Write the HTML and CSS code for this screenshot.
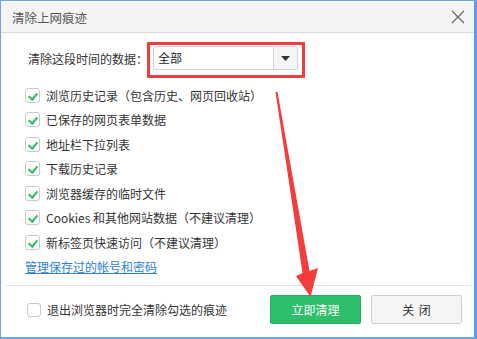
FILE: index.html
```html
<!DOCTYPE html>
<html lang="zh-CN">
<head>
  <meta charset="UTF-8">
  <title>清除上网痕迹</title>
  <link rel="stylesheet" href="styles.css">
</head>
<body>

<div class="window">
  <div class="titlebar">
    <span class="title">清除上网痕迹</span>
    <svg class="close" width="14" height="14" viewBox="0 0 14 14">
      <path d="M1 1 L13 13 M13 1 L1 13" stroke="#666" stroke-width="1.2" fill="none"/>
    </svg>
  </div>

  <div class="content">
    <div class="range-row">
      <span class="range-label">清除这段时间的数据：</span>
      <div class="select">
        <span class="select-value">全部</span>
        <span class="select-btn">
          <svg width="9" height="5" viewBox="0 0 9 5"><path d="M0 0 H9 L4.5 5 Z" fill="#333"/></svg>
        </span>
      </div>
      <div class="mark-box"></div>
    </div>

    <ul class="options">
      <li><span class="check on"></span>浏览历史记录（包含历史、网页回收站）</li>
      <li><span class="check on"></span>已保存的网页表单数据</li>
      <li><span class="check on"></span>地址栏下拉列表</li>
      <li><span class="check on"></span>下载历史记录</li>
      <li><span class="check on"></span>浏览器缓存的临时文件</li>
      <li><span class="check on"></span>Cookies 和其他网站数据（不建议清理）</li>
      <li><span class="check on"></span>新标签页快速访问（不建议清理）</li>
      <li class="link-row"><a href="#">管理保存过的帐号和密码</a></li>
    </ul>
  </div>

  <div class="footer">
    <label class="exit-opt"><span class="check"></span>退出浏览器时完全清除勾选的痕迹</label>
    <div class="buttons">
      <button class="btn btn-primary">立即清理</button>
      <button class="btn btn-close">关 闭</button>
    </div>
  </div>

  <svg class="arrow" width="477" height="339" viewBox="0 0 477 339">
    <polygon points="275.5,92 277.5,92 309.5,271 318,268 310.5,297 296,276 302.5,273" fill="#f33c3c"/>
  </svg>
</div>

</body>
</html>
```

FILE: styles.css
```css
* {
  box-sizing: border-box;
}
body {
  margin: 0;
  background: #fff;
  font-family: "Noto Sans CJK SC", "Microsoft YaHei", sans-serif;
  font-size: 12px;
  color: #333;
}
.window {
  position: relative;
  width: 477px;
  height: 339px;
  border: 1px solid #6aa6ee;
  border-right: 3px solid #5c9cea;
  border-bottom: 2px solid #6aa6ee;
  background: #fff;
  display: flex;
  flex-direction: column;
}
.titlebar {
  height: 32px;
  background: #f4f4f4;
  border-top: 1px solid #fff;
  border-bottom: 1px solid #d9d9d9;
  display: flex;
  align-items: center;
  justify-content: space-between;
  padding: 0 9px 0 11px;
}
.title {
  color: #555;
  font-size: 12.5px;
}
.close {
  display: block;
}
.content {
  padding: 0 0 0 24px;
  flex: 1;
}
.range-row {
  position: relative;
  display: flex;
  align-items: center;
  margin-top: 13px;
  padding-left: 3px;
}
.range-label {
  width: 125px;
}
.select {
  width: 145px;
  height: 24px;
  border: 1px solid #c9d4df;
  border-radius: 2px;
  display: flex;
  align-items: stretch;
  background: #fff;
}
.select-value {
  flex: 1;
  padding-left: 4px;
  line-height: 22px;
  color: #222;
}
.select-btn {
  width: 24px;
  border-left: 1px solid #c9d4df;
  background: #f5f5f5;
  display: flex;
  align-items: center;
  justify-content: center;
}
.mark-box {
  position: absolute;
  left: 122px;
  top: -4px;
  width: 158px;
  height: 36px;
  border: 3px solid #f33c3c;
}
.options {
  list-style: none;
  margin: 13px 0 0;
  padding: 0;
}
.options li {
  height: 24.5px;
  display: flex;
  align-items: center;
}
.check {
  width: 15px;
  height: 15px;
  border: 1px solid #c8c8c8;
  border-radius: 3px;
  background: #fff;
  margin-right: 6px;
  position: relative;
  flex: none;
}
.check.on::after {
  content: "";
  position: absolute;
  left: 4px;
  top: 2px;
  width: 4px;
  height: 7px;
  border-right: 2px solid #2dbb66;
  border-bottom: 2px solid #2dbb66;
  transform: rotate(40deg);
}
.link-row a {
  color: #2d7fd6;
  text-decoration: underline;
}
.footer {
  margin: 0 3px 13px 5px;
  border-top: 1px solid #dfe5ec;
  padding-top: 9px;
  display: flex;
  align-items: center;
  justify-content: space-between;
}
.exit-opt {
  display: flex;
  align-items: center;
  padding-left: 21px;
}
.exit-opt .check {
  width: 14px;
  height: 14px;
}
.buttons {
  display: flex;
  gap: 10px;
  padding-right: 9px;
}
.btn {
  width: 91px;
  height: 29px;
  border: 1px solid #cfcfcf;
  border-radius: 2px;
  background: #f5f5f5;
  font-family: inherit;
  font-size: 12px;
  color: #333;
}
.btn-close {
  word-spacing: 2px;
}
.btn-primary {
  background: #2dbf6a;
  border-color: #27ad5e;
  color: #fff;
}
.arrow {
  position: absolute;
  left: -1px;
  top: -1px;
  pointer-events: none;
}
```
